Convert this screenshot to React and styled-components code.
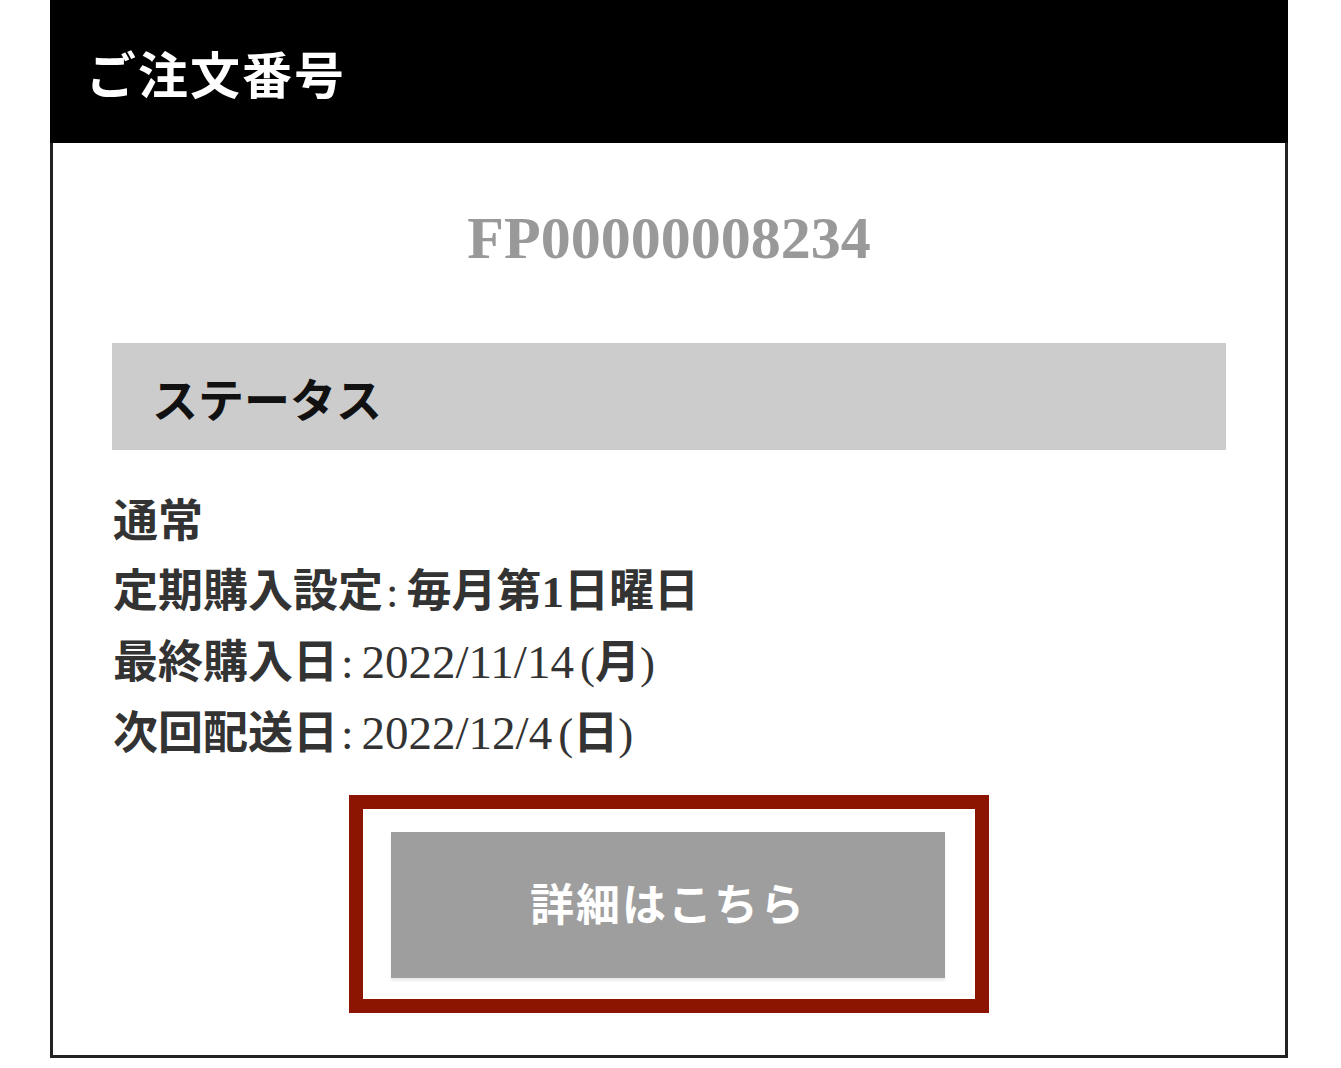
import React from 'react';
import styled, { createGlobalStyle } from 'styled-components';

const GlobalStyle = createGlobalStyle`
    body {
        margin: 0;
        background: #fff;
        font-family: "Liberation Serif", "Noto Sans CJK JP", serif;
    }
`;

const Page = styled.div`
    padding: 0 53px 10px 50px;
`;

const Card = styled.div`
    border: 3px solid #222;
    border-top: none;
    background: #fff;
`;

const Header = styled.div`
    background: #000;
    height: 143px;
    margin: 0 -3px;
    padding-left: 36px;
    display: flex;
    align-items: center;
`;

const Title = styled.h2`
    margin: 0;
    color: #fff;
    font-family: "Noto Sans CJK JP", sans-serif;
    font-size: 50px;
    font-weight: 700;
    letter-spacing: 2px;
`;

const Body = styled.div`
    padding: 0 59px 42px;
`;

const OrderNo = styled.div`
    padding-top: 60px;
    margin-bottom: 70px;
    line-height: 70px;
    text-align: center;
    color: #999;
    font-family: "Liberation Serif", serif;
    font-size: 60px;
    font-weight: 700;
`;

const StatusBar = styled.div`
    background: #ccc;
    height: 107px;
    padding-left: 40px;
    display: flex;
    align-items: center;
    font-family: "Noto Sans CJK JP", sans-serif;
    font-size: 46px;
    font-weight: 700;
    color: #111;
`;

const InfoList = styled.ul`
    list-style: none;
    margin: 0;
    padding: 37px 0 0 1px;
`;

const InfoRow = styled.li`
    line-height: 70px;
    font-size: 45px;
    color: #333;
    white-space: nowrap;
`;

const Label = styled.span`
    font-weight: 700;
`;

const Colon = styled.span`
    font-weight: 400;
    margin: 0 8px 0 3px;
`;

const Value = styled.span`
    font-size: 47px;
    font-weight: 400;
`;

const Strong = styled.span`
    font-weight: 700;
`;

const Paren = styled.span`
    font-weight: 400;
    margin-left: ${(p) => (p.$open ? '6px' : '0')};
`;

const Highlight = styled.div`
    width: 640px;
    box-sizing: border-box;
    margin: 26px auto 0;
    border: 14px solid #8b1500;
    padding: 23px 30px 21px 28px;
    background: #fff;
`;

const DetailButton = styled.button`
    display: flex;
    align-items: center;
    justify-content: center;
    width: 100%;
    height: 146px;
    border: none;
    background: #9e9e9e;
    box-shadow: 0 3px 2px rgba(0, 0, 0, 0.08);
    color: #fff;
    font-family: "Noto Sans CJK JP", sans-serif;
    font-size: 44px;
    font-weight: 700;
    letter-spacing: 2px;
    padding: 0 0 6px;
    cursor: pointer;
`;

const App = () => {
    return (
        <>
            <GlobalStyle />
            <Page>
                <Card>
                    <Header>
                        <Title>ご注文番号</Title>
                    </Header>
                    <Body>
                        <OrderNo>FP00000008234</OrderNo>
                        <StatusBar>ステータス</StatusBar>
                        <InfoList>
                            <InfoRow>
                                <Label>通常</Label>
                            </InfoRow>
                            <InfoRow>
                                <Label>定期購入設定</Label>
                                <Colon>:</Colon>
                                <Strong>毎月第1日曜日</Strong>
                            </InfoRow>
                            <InfoRow>
                                <Label>最終購入日</Label>
                                <Colon>:</Colon>
                                <Value>2022/11/14</Value>
                                <Paren $open>(</Paren>
                                <Strong>月</Strong>
                                <Paren>)</Paren>
                            </InfoRow>
                            <InfoRow>
                                <Label>次回配送日</Label>
                                <Colon>:</Colon>
                                <Value>2022/12/4</Value>
                                <Paren $open>(</Paren>
                                <Strong>日</Strong>
                                <Paren>)</Paren>
                            </InfoRow>
                        </InfoList>
                        <Highlight>
                            <DetailButton>詳細はこちら</DetailButton>
                        </Highlight>
                    </Body>
                </Card>
            </Page>
        </>
    );
};

export default App;
